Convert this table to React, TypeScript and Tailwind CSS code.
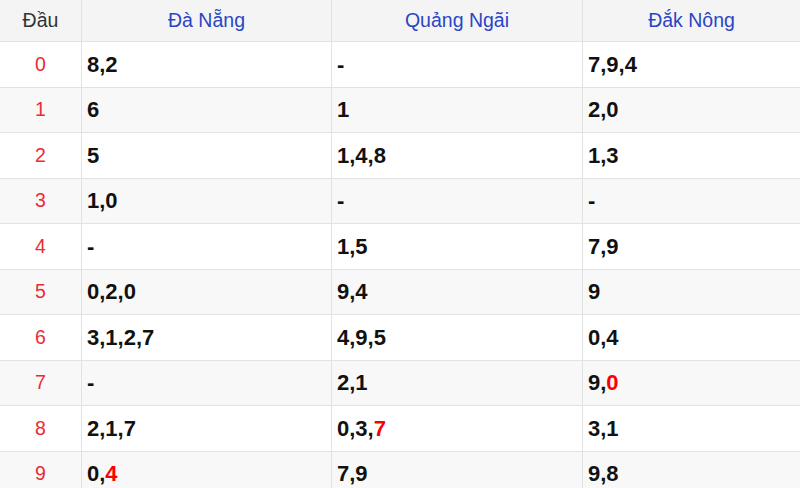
import React from 'react';

type Cell = { text: string; hot?: boolean }[];

const ROWS: { head: string; cols: Cell[] }[] = [
  { head: '0', cols: [[{ text: '8,2' }], [{ text: '-' }], [{ text: '7,9,4' }]] },
  { head: '1', cols: [[{ text: '6' }], [{ text: '1' }], [{ text: '2,0' }]] },
  { head: '2', cols: [[{ text: '5' }], [{ text: '1,4,8' }], [{ text: '1,3' }]] },
  { head: '3', cols: [[{ text: '1,0' }], [{ text: '-' }], [{ text: '-' }]] },
  { head: '4', cols: [[{ text: '-' }], [{ text: '1,5' }], [{ text: '7,9' }]] },
  { head: '5', cols: [[{ text: '0,2,0' }], [{ text: '9,4' }], [{ text: '9' }]] },
  { head: '6', cols: [[{ text: '3,1,2,7' }], [{ text: '4,9,5' }], [{ text: '0,4' }]] },
  { head: '7', cols: [[{ text: '-' }], [{ text: '2,1' }], [{ text: '9,' }, { text: '0', hot: true }]] },
  { head: '8', cols: [[{ text: '2,1,7' }], [{ text: '0,3,' }, { text: '7', hot: true }], [{ text: '3,1' }]] },
  { head: '9', cols: [[{ text: '0,' }, { text: '4', hot: true }], [{ text: '7,9' }], [{ text: '9,8' }]] },
];

const GRID = 'grid grid-cols-[82px_250px_251px_1fr]';

const App: React.FC = () => {
  return (
    <div className="w-[800px] h-[488px] overflow-hidden bg-white font-['Liberation_Sans',Arial,sans-serif]">
      <div className={`${GRID} h-[42px] bg-[#f4f4f4] border-b border-[#e2e2e2] text-[19.5px]`}>
        <div className="flex items-center justify-center border-r border-[#e2e2e2] text-[#333333]">Đầu</div>
        <div className="flex items-center justify-center border-r border-[#e2e2e2] text-[#2a46c4]">Đà Nẵng</div>
        <div className="flex items-center justify-center border-r border-[#e2e2e2] text-[#2a46c4]">Quảng Ngãi</div>
        <div className="flex items-center justify-center text-[#2a46c4]">Đắk Nông</div>
      </div>
      {ROWS.map((row, i) => (
        <div
          key={row.head}
          className={`${GRID} h-[45.5px] border-b border-[#e2e2e2] ${i % 2 === 1 ? 'bg-[#f8f8f8]' : 'bg-white'}`}
        >
          <div className="flex items-center justify-center border-r border-[#e2e2e2] text-[19.5px] text-[#ee2a33]">
            {row.head}
          </div>
          {row.cols.map((cell, j) => (
            <div
              key={j}
              className={`flex items-center pl-[5px] text-[22px] font-bold text-[#111111] ${j < 2 ? 'border-r border-[#e2e2e2]' : ''}`}
            >
              {cell.map((part, k) => (
                <span key={k} className={part.hot ? 'text-[#ff0000]' : ''}>
                  {part.text}
                </span>
              ))}
            </div>
          ))}
        </div>
      ))}
    </div>
  );
};

export default App;
